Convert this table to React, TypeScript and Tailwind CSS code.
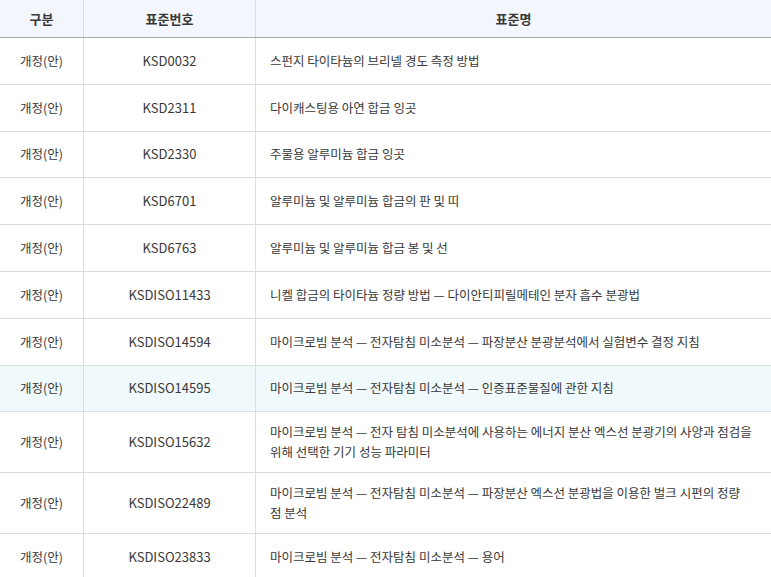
import React from "react";

const rows: { no: string; name: string; hl?: boolean }[] = [
  { no: "KSD0032", name: "스펀지 타이타늄의 브리넬 경도 측정 방법" },
  { no: "KSD2311", name: "다이캐스팅용 아연 합금 잉곳" },
  { no: "KSD2330", name: "주물용 알루미늄 합금 잉곳" },
  { no: "KSD6701", name: "알루미늄 및 알루미늄 합금의 판 및 띠" },
  { no: "KSD6763", name: "알루미늄 및 알루미늄 합금 봉 및 선" },
  { no: "KSDISO11433", name: "니켈 합금의 타이타늄 정량 방법 — 다이안티피릴메테인 분자 흡수 분광법" },
  { no: "KSDISO14594", name: "마이크로빔 분석 — 전자탐침 미소분석 — 파장분산 분광분석에서 실험변수 결정 지침" },
  { no: "KSDISO14595", name: "마이크로빔 분석 — 전자탐침 미소분석 — 인증표준물질에 관한 지침", hl: true },
  { no: "KSDISO15632", name: "마이크로빔 분석 — 전자 탐침 미소분석에 사용하는 에너지 분산 엑스선 분광기의 사양과 점검을 위해 선택한 기기 성능 파라미터" },
  { no: "KSDISO22489", name: "마이크로빔 분석 — 전자탐침 미소분석 — 파장분산 엑스선 분광법을 이용한 벌크 시편의 정량 점\u00a0분석" },
  { no: "KSDISO23833", name: "마이크로빔 분석 — 전자탐침 미소분석 — 용어" },
];

export default function App() {
  return (
    <div
      className="w-[771px] h-[577px] overflow-hidden bg-white text-[13px] text-[#383838]"
      style={{ fontFamily: '"Noto Sans CJK KR", "Noto Sans", sans-serif' }}
    >
      <div className="grid grid-cols-[83px_1px_171px_1px_1fr] h-[38px] bg-[#f3f7fd] border-b border-[#aaaaaa] font-bold items-center">
        <div className="text-center">구분</div>
        <div className="h-full bg-[#dddddd]" />
        <div className="text-center">표준번호</div>
        <div className="h-full bg-[#dddddd]" />
        <div className="text-center">표준명</div>
      </div>
      {rows.map((r) => (
        <div
          key={r.no}
          className={`grid grid-cols-[83px_1px_171px_1px_1fr] min-h-[46.8px] border-b border-[#dddddd] ${r.hl ? "bg-[#f0f9fb]" : "bg-white"}`}
        >
          <div className="flex items-center justify-center leading-[20px] text-[12.5px]">개정(안)</div>
          <div className="bg-[#dddddd]" />
          <div className="flex items-center justify-center leading-[20px]">{r.no}</div>
          <div className="bg-[#dddddd]" />
          <div className="flex items-center pl-[14px] pr-[14px] py-[10px] leading-[20px] text-[12.5px]">{r.name}</div>
        </div>
      ))}
    </div>
  );
}
